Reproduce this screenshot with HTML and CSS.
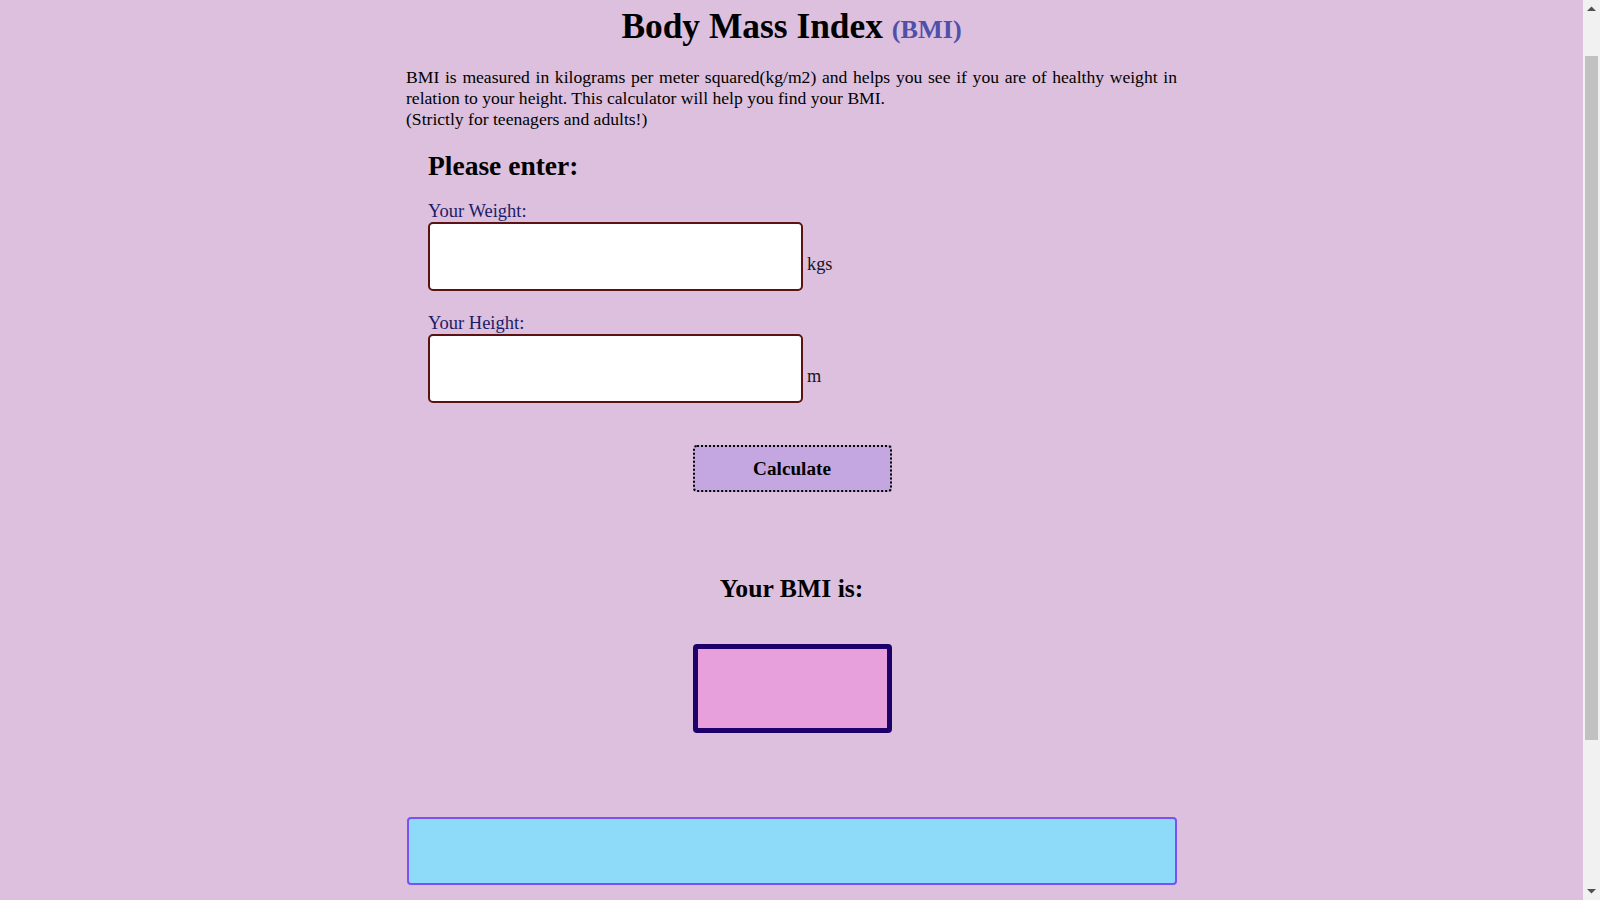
FILE: index.html
```html
<!DOCTYPE html>
<html lang="en">
<head>
<meta charset="utf-8">
<title>Body Mass Index (BMI)</title>
<link rel="stylesheet" href="styles.css">
</head>
<body>
<div class="page">
  <h1 class="title">Body Mass Index <span class="title-abbr">(BMI)</span></h1>
  <p class="intro">BMI is measured in kilograms per meter squared(kg/m2) and helps you see if you are of healthy weight in relation to your height. This calculator will help you find your BMI.<br>(Strictly for teenagers and adults!)</p>

  <div class="form">
    <h2 class="form-title">Please enter:</h2>
    <label class="field-label" for="weight">Your Weight:</label>
    <div class="field-row">
      <input class="field-input" id="weight" type="text">
      <span class="field-unit">kgs</span>
    </div>
    <label class="field-label field-label-second" for="height">Your Height:</label>
    <div class="field-row">
      <input class="field-input" id="height" type="text">
      <span class="field-unit">m</span>
    </div>
  </div>

  <button class="calc-btn" type="button">Calculate</button>

  <h2 class="result-title">Your BMI is:</h2>
  <div class="result-box"></div>

  <div class="info-box"></div>
</div>

<div class="scrollbar" aria-hidden="true">
  <div class="sb-btn">
    <svg width="9" height="5" viewBox="0 0 9 5"><path d="M0 5 L4.5 0.5 L9 5 Z" fill="#505050"/></svg>
  </div>
  <div class="sb-track">
    <div class="sb-thumb"></div>
  </div>
  <div class="sb-btn">
    <svg width="9" height="5" viewBox="0 0 9 5"><path d="M0 0 L4.5 4.5 L9 0 Z" fill="#505050"/></svg>
  </div>
</div>
</body>
</html>
```

FILE: styles.css
```css
html, body {
  margin: 0;
  padding: 0;
}

body {
  background: #dcc0dd;
  color: #000;
  font-family: "Liberation Serif", "Times New Roman", serif;
  margin-right: 17px;
}

.page {
  width: 771px;
  margin: 0 auto;
  padding: 6px 0 254px;
  display: flex;
  flex-direction: column;
}

.title {
  margin: 0;
  font-size: 35.4px;
  line-height: 40px;
  font-weight: bold;
  text-align: center;
}

.title-abbr {
  font-size: 26.2px;
  line-height: 1;
  color: #5050aa;
}

.intro {
  margin: 21px 0 0;
  font-size: 17.6px;
  line-height: 21px;
  text-align: justify;
}

.form {
  padding-left: 22px;
  display: flex;
  flex-direction: column;
  align-items: flex-start;
}

.form-title {
  margin: 20px 0 0;
  font-size: 27.5px;
  line-height: 31px;
  font-weight: bold;
}

.field-label {
  margin-top: 20px;
  font-size: 18.5px;
  line-height: 21px;
  color: #1c1c66;
}

.field-label-second {
  margin-top: 22px;
}

.field-row {
  margin-top: 0;
  display: flex;
  align-items: flex-end;
}

.field-input {
  box-sizing: border-box;
  width: 375px;
  height: 69px;
  margin: 0;
  border: 2px solid #5a1212;
  border-radius: 5px;
  background: #fff;
  font-family: "Liberation Serif", "Times New Roman", serif;
  font-size: 17.6px;
  outline: none;
}

.field-unit {
  margin: 0 0 16px 4px;
  font-size: 18.3px;
  line-height: 21px;
  color: #14141e;
}

.calc-btn {
  box-sizing: border-box;
  align-self: center;
  width: 199px;
  height: 47px;
  margin: 42px 0 0 1px;
  border: 2px dotted #000;
  border-radius: 4px;
  background: #c4a6e0;
  color: #000;
  font-family: "Liberation Serif", "Times New Roman", serif;
  font-size: 19.2px;
  font-weight: bold;
  padding: 0;
  cursor: pointer;
}

.result-title {
  margin: 82px 0 0;
  font-size: 25.7px;
  line-height: 29px;
  font-weight: bold;
  text-align: center;
}

.result-box {
  box-sizing: border-box;
  align-self: center;
  width: 199px;
  height: 89px;
  margin: 41px 0 0 1px;
  border: 5px solid #1e006a;
  border-radius: 4px;
  background: #e8a0dc;
}

.info-box {
  box-sizing: border-box;
  width: 770px;
  height: 68px;
  margin: 84px 0 0 1px;
  border: 2px solid #7b50f5;
  border-radius: 4px;
  background: #8edbf9;
}

/* decorative classic scrollbar drawn over the right edge of the viewport */
.scrollbar {
  position: fixed;
  top: 0;
  right: 0;
  width: 17px;
  height: 100vh;
  background: #f1f1f1;
  display: flex;
  flex-direction: column;
}

.sb-btn {
  height: 17px;
  flex: none;
  display: flex;
  align-items: center;
  justify-content: center;
}

.sb-track {
  flex: 1;
  padding: 39px 2px 0;
}

.sb-thumb {
  height: 684px;
  background: #c1c1c1;
}
```
